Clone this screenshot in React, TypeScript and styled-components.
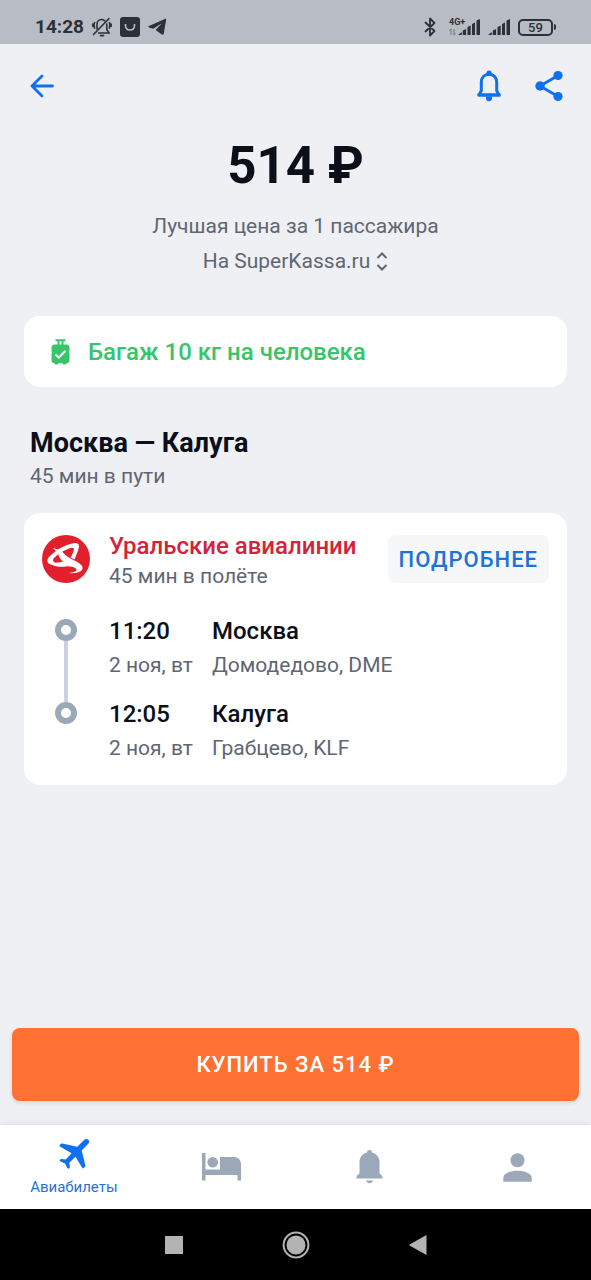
import React from "react";
import styled, { createGlobalStyle } from "styled-components";

const color = {
  page: "#eef0f4",
  status: "#b8bcc4",
  statusInk: "#2d3036",
  ink: "#0b0f1a",
  muted: "#5f6673",
  blue: "#0f70f2",
  link: "#1f72d6",
  green: "#38c56a",
  red: "#d3233b",
  orange: "#ff7033",
  icon: "#9ba8b8",
  rail: "#ccd1df",
};

const GlobalStyle = createGlobalStyle`
  * { box-sizing: border-box; }
  body {
    margin: 0;
    background: ${color.page};
    font-family: Roboto, "Noto Sans", sans-serif;
    color: ${color.ink};
  }
  h1, h2, h3, p, ul { margin: 0; padding: 0; }
  button { font: inherit; border: 0; padding: 0; background: none; cursor: pointer; }
  svg { display: block; flex: none; }
`;

const Screen = styled.div`
  min-height: 100vh;
  display: flex;
  flex-direction: column;
`;

const StatusBar = styled.div`
  display: flex;
  align-items: center;
  justify-content: space-between;
  height: 44px;
  padding: 10px 35px 0;
  background: ${color.status};
  color: ${color.statusInk};
`;

const StatusGroup = styled.div<{ $gap: number }>`
  display: flex;
  align-items: center;
  gap: ${(p) => p.$gap}px;
`;

const Clock = styled.span`
  font-size: 19px;
  line-height: 24px;
  font-weight: 700;
`;

const Network = styled.div`
  display: flex;
  align-items: flex-end;
`;

const NetworkType = styled.div`
  display: flex;
  flex-direction: column;
  gap: 1px;
  width: 9px;
  font-size: 9px;
  line-height: 9px;
  font-weight: 700;
  white-space: nowrap;
`;

const Battery = styled.div`
  display: flex;
  align-items: center;
`;

const BatteryBody = styled.span`
  width: 35px;
  height: 17px;
  border: 2px solid ${color.statusInk};
  border-radius: 5px;
  font-size: 13px;
  line-height: 13px;
  font-weight: 500;
  text-align: center;
`;

const BatteryTip = styled.span`
  width: 2px;
  height: 6px;
  margin-left: 1px;
  border-radius: 0 2px 2px 0;
  background: ${color.statusInk};
`;

const Toolbar = styled.header`
  display: flex;
  align-items: center;
  justify-content: space-between;
  height: 84px;
  padding: 0 26px;
`;

const ToolbarActions = styled.div`
  display: flex;
  gap: 28px;
`;

const IconButton = styled.button`
  display: flex;
  align-items: center;
  justify-content: center;
  width: 32px;
  height: 40px;
  color: ${color.blue};
`;

const Content = styled.main`
  flex: 1;
  display: flex;
  flex-direction: column;
  padding: 7px 24px 24px;
`;

const PriceBlock = styled.section`
  display: flex;
  flex-direction: column;
  align-items: center;
  margin-bottom: 37px;
  font-size: 21px;
  line-height: 35px;
  color: ${color.muted};
`;

const Price = styled.h1`
  margin-bottom: 12px;
  font-size: 51px;
  line-height: 62px;
  font-weight: 700;
  color: ${color.ink};
`;

const AgencyButton = styled.button`
  display: flex;
  align-items: center;
  gap: 6px;
  color: ${color.muted};
`;

const Card = styled.section`
  background: #fff;
  border-radius: 16px;
`;

const BaggageCard = styled(Card)`
  display: flex;
  align-items: center;
  gap: 17px;
  min-height: 71px;
  padding: 0 26px;
  margin-bottom: 39px;
  font-size: 24px;
  line-height: 30px;
  font-weight: 500;
  color: ${color.green};
`;

const RouteHeading = styled.div`
  padding: 0 6px;
  margin-bottom: 21px;
`;

const RouteTitle = styled.h2`
  font-size: 27px;
  line-height: 34px;
  font-weight: 700;
`;

const Note = styled.p<{ $line: number }>`
  font-size: 21px;
  line-height: ${(p) => p.$line}px;
  color: ${color.muted};
`;

const FlightCard = styled(Card)`
  padding: 22px 18px 20px;
`;

const FlightHeader = styled.div`
  display: flex;
  align-items: flex-start;
  gap: 19px;
  margin-bottom: 19px;
`;

const Airline = styled.div`
  flex: 1;
`;

const AirlineName = styled.h3`
  font-size: 24px;
  line-height: 22px;
  font-weight: 500;
  color: ${color.red};
`;

const DetailsButton = styled.button`
  height: 48px;
  padding: 0 11px;
  border-radius: 8px;
  background: #f5f7f9;
  color: ${color.link};
  font-size: 22px;
  font-weight: 500;
  letter-spacing: 1px;
`;

const Stops = styled.ul`
  list-style: none;
`;

const Stop = styled.li`
  display: grid;
  grid-template-columns: 48px 84px 1fr;
  column-gap: 19px;
`;

const Rail = styled.div`
  display: flex;
  flex-direction: column;
  align-items: center;
`;

const RailLine = styled.span<{ $visible: boolean; $lead?: boolean }>`
  width: 4px;
  ${(p) => (p.$lead ? "height: 5px;" : "flex: 1;")}
  background: ${(p) => (p.$visible ? color.rail : "transparent")};
`;

const RailDot = styled.span`
  width: 22px;
  height: 22px;
  border: 6px solid ${color.icon};
  border-radius: 50%;
`;

const StopCell = styled.div<{ $last: boolean }>`
  padding-bottom: ${(p) => (p.$last ? 0 : 15)}px;
  white-space: nowrap;
`;

const StopMain = styled.p`
  font-size: 24px;
  line-height: 34px;
  font-weight: 500;
`;

const BuyArea = styled.div`
  padding: 0 12px 24px;
`;

const BuyButton = styled.button`
  display: block;
  width: 100%;
  height: 73px;
  border-radius: 8px;
  background: ${color.orange};
  box-shadow: 0 2px 4px rgba(60, 70, 100, 0.14);
  color: #fff;
  font-size: 22px;
  font-weight: 500;
  letter-spacing: 1px;
`;

const TabBar = styled.nav`
  display: flex;
  height: 84px;
  background: #fff;
  box-shadow: 0 -1px 4px rgba(70, 70, 120, 0.1);
`;

const Tab = styled.a<{ $active?: boolean }>`
  flex: 1;
  display: flex;
  flex-direction: column;
  align-items: center;
  justify-content: center;
  gap: 8px;
  font-size: 15px;
  line-height: 18px;
  text-decoration: none;
  color: ${(p) => (p.$active ? color.link : color.icon)};
`;

const SystemNav = styled.div`
  display: flex;
  align-items: center;
  justify-content: center;
  gap: 90px;
  height: 71px;
  background: #000;
`;

const SystemButton = styled.button`
  display: flex;
  align-items: center;
  justify-content: center;
  width: 32px;
  height: 32px;
  color: #b3b3b3;
`;

const SignalBars = () => (
  <svg width="22" height="17" viewBox="0 0 22 17" fill="currentColor">
    <path d="M0 16l3.800-3v3zM4.800 11.500l3.300-1.500v6H4.800zM9.500 8l3.200-1.500V16H9.500zM14 5l3-1.500V16h-3zM18.500 1.500 22 0v16h-3.500z" />
  </svg>
);

const stops = [
  { time: "11:20", date: "2 ноя, вт", city: "Москва", airport: "Домодедово, DME" },
  { time: "12:05", date: "2 ноя, вт", city: "Калуга", airport: "Грабцево, KLF" },
];

export default function App() {
  return (
    <>
      <GlobalStyle />
      <Screen>
        <StatusBar>
          <StatusGroup $gap={8}>
            <Clock>14:28</Clock>
            <svg width="20" height="20" viewBox="0 0 20 20" fill="none" stroke="currentColor" strokeWidth="1.6" strokeLinecap="round">
              <path d="M1.500 17.500 17 1.500M5 12V7.500C5 4.500 7 2.500 9.500 2.500c1.200 0 2.300.4 3.100 1.200M14.800 7v5.500l2.200 3.500H6.500M8.500 18.600h3M2.600 5.500c-.8 1.500-.8 4 0 5.600M.8 7v2.500M17.300 5.500c.8 1.500.8 4 0 5.600M19.100 7v2.500" />
            </svg>
            <svg width="20" height="20" viewBox="0 0 20 20">
              <rect width="20" height="20" rx="3" fill="currentColor" />
              <path d="M5.500 8.500c.3 6 8.700 6 9 0" fill="none" stroke="#b8bcc4" strokeWidth="1.500" strokeLinecap="round" />
              <circle cx="5.500" cy="8" r="1" fill="#b8bcc4" />
              <circle cx="14.500" cy="8" r="1" fill="#b8bcc4" />
            </svg>
            <svg width="19" height="18" viewBox="0 0 19 18" fill="currentColor">
              <path d="M18.200 1.500c.1-.6-.2-.9-.8-.7L1 8c-.9.4-.8 1.100 0 1.400l4.300 1.400 8.600-5.600-6.300 6.700 6.300 4.600c.9.600 1.600.3 1.800-.8z" />
            </svg>
          </StatusGroup>
          <StatusGroup $gap={8}>
            <svg width="17" height="20" viewBox="0 0 17 20" fill="none" stroke="currentColor" strokeWidth="1.800" strokeLinejoin="round" strokeLinecap="round">
              <path d="M1.500 5.500l9 8.500-4.500 4.500V1.500l4.500 4.500-9 8.500" />
            </svg>
            <Network>
              <NetworkType>
                4G+
                <svg width="7" height="8" viewBox="0 0 7 8" fill="none" stroke="#6c7078" strokeWidth="1">
                  <path d="M2 7V1M.5 2.500 2 .8M5 1v6M6.500 5.500 5 7.200" />
                </svg>
              </NetworkType>
              <SignalBars />
            </Network>
            <SignalBars />
            <Battery>
              <BatteryBody>59</BatteryBody>
              <BatteryTip />
            </Battery>
          </StatusGroup>
        </StatusBar>

        <Toolbar>
          <IconButton aria-label="Назад">
            <svg width="24" height="24" viewBox="0 0 24 24" fill="none" stroke="currentColor" strokeWidth="2.800" strokeLinecap="round" strokeLinejoin="round">
              <path d="M22.500 12H2M12 2 2 12l10 10" />
            </svg>
          </IconButton>
          <ToolbarActions>
            <IconButton aria-label="Подписаться на цену">
              <svg width="26" height="32" viewBox="0 0 26 32">
                <path d="M13 4.200c-4.700 0-7.700 3.600-7.700 8.300v8.300L3 25h20l-2.300-4.200v-8.300c0-4.700-3-8.300-7.700-8.300z" fill="none" stroke="currentColor" strokeWidth="3" strokeLinejoin="round" />
                <circle cx="13" cy="3.200" r="2.600" fill="currentColor" />
                <path d="M10 26.500h6v1.800a3 3 0 0 1-6 0z" fill="currentColor" />
                <path d="M1.500 25h23" stroke="currentColor" strokeWidth="3" />
              </svg>
            </IconButton>
            <IconButton aria-label="Поделиться">
              <svg width="30" height="32" viewBox="0 0 30 32" fill="currentColor">
                <path d="M24 5.500 6 16l18 10.500" fill="none" stroke="currentColor" strokeWidth="2.800" />
                <circle cx="24" cy="5.500" r="4.600" />
                <circle cx="6" cy="16" r="4.700" />
                <circle cx="24" cy="26.500" r="4.600" />
              </svg>
            </IconButton>
          </ToolbarActions>
        </Toolbar>

        <Content>
          <PriceBlock>
            <Price>514 ₽</Price>
            <p>Лучшая цена за 1 пассажира</p>
            <AgencyButton>
              На SuperKassa.ru
              <svg width="12" height="20" viewBox="0 0 12 20" fill="none" stroke="currentColor" strokeWidth="2">
                <path d="M1.500 6 6 1.500 10.500 6M1.500 13 6 17.500l4.500-4.500" />
              </svg>
            </AgencyButton>
          </PriceBlock>

          <BaggageCard>
            <svg width="21" height="26" viewBox="0 0 21 26">
              <path d="M5.500 1.300h10M8.500 1v5M12.500 1v5" stroke="currentColor" strokeWidth="2" />
              <path d="M4.500 5.500h12c2 0 3 1.500 3 3.500v3c0 .8-.5 1-.5 1.500s.5.700.5 1.500v6c0 2-1.200 3.300-3 3.300 0 .6-.4 1.100-1.200 1.100h-1.600c-.8 0-1.200-.5-1.200-1.100h-4c0 .6-.4 1.100-1.200 1.100H5.700c-.8 0-1.200-.5-1.200-1.100-1.900 0-3-1.300-3-3.300v-6c0-.8.500-1 .5-1.500s-.5-.7-.5-1.500V9c0-2 1-3.500 3-3.500z" fill="currentColor" />
              <path d="M5.500 15.500l3.300 3.200 6.700-6.900" fill="none" stroke="#fff" strokeWidth="2" />
            </svg>
            Багаж 10 кг на человека
          </BaggageCard>

          <RouteHeading>
            <RouteTitle>Москва — Калуга</RouteTitle>
            <Note $line={32}>45 мин в пути</Note>
          </RouteHeading>

          <FlightCard>
            <FlightHeader>
              <svg width="48" height="48" viewBox="0 0 48 48">
                <circle cx="24" cy="24" r="24" fill="#e21f2c" />
                <g fill="#fff">
                  <path d="M10 30C4.500 28.500 4 24.500 8 21 13.500 15.500 23 9.500 31.500 8.200c5-.6 6.500 1.800 5 5.800-1.200 3.800-2.600 7-4 10.500l-4-2c1.500-2.500 2.700-5 3.300-7.500.4-2.300-.6-2.800-3-2C22 15 15.500 19.500 12 23c-1.600 2-1.400 3.500 1 4z" />
                  <path d="M11 13l5.500 1.500 4.500-2-1.500 3.500c2.500 3 5 5 9 7.500 5 2.800 10.500 4.500 12 8.500 1.200 4.500-6 7-14 6 5-.5 8.500-1.500 8-3.500-.6-2-7-4-11.500-6.500-4.400-2.600-6-6.500-7-9.500z" />
                  <path d="M7 27c5 1.200 11 .6 15.500-.8 4 2.400 10 3.600 13.500 7.300-4-1.500-8-2.300-12-2.100-5 .8-13 1-17-4.400z" />
                </g>
              </svg>
              <Airline>
                <AirlineName>Уральские авиалинии</AirlineName>
                <Note $line={38}>45 мин в полёте</Note>
              </Airline>
              <DetailsButton>ПОДРОБНЕЕ</DetailsButton>
            </FlightHeader>
            <Stops>
              {stops.map((stop, i) => {
                const last = i === stops.length - 1;
                return (
                  <Stop key={stop.time}>
                    <Rail>
                      <RailLine $lead $visible={i > 0} />
                      <RailDot />
                      <RailLine $visible={!last} />
                    </Rail>
                    <StopCell $last={last}>
                      <StopMain>{stop.time}</StopMain>
                      <Note $line={34}>{stop.date}</Note>
                    </StopCell>
                    <StopCell $last={last}>
                      <StopMain>{stop.city}</StopMain>
                      <Note $line={34}>{stop.airport}</Note>
                    </StopCell>
                  </Stop>
                );
              })}
            </Stops>
          </FlightCard>
        </Content>

        <BuyArea>
          <BuyButton>КУПИТЬ ЗА 514 ₽</BuyButton>
        </BuyArea>

        <TabBar>
          <Tab href="#flights" $active>
            <svg width="32" height="32" viewBox="0 0 32 32" fill={color.blue}>
              <path d="M30.400 1.700c1.200 1.200.9 3-.4 4.400l-6.300 6.500 3.700 14.800c.1.500 0 .9-.3 1.200l-1.400 1.400c-.5.500-1.200.4-1.500-.2L17.500 18.700l-6.200 6 .6 4.300c0 .3-.1.600-.3.800l-.8.700c-.4.400-1 .3-1.300-.2L7 25.600l-4.900-2.300c-.5-.3-.6-.9-.2-1.300l.8-.8c.2-.2.500-.3.800-.3l4.200.5 5.900-6.200L1.900 8.600c-.6-.3-.7-1-.2-1.500l1.400-1.300c.3-.3.800-.4 1.200-.3l15 3.200L26 2.100c1.400-1.300 3.200-1.600 4.400-.4z" />
            </svg>
            Авиабилеты
          </Tab>
          <Tab href="#hotels" aria-label="Отели">
            <svg width="39" height="28" viewBox="0 0 39 28" fill="currentColor">
              <path d="M0 0h3.500v16.500H18V4h14c4 0 7 3 7 7v16.500h-3.500v-5.500h-32v5.500H0z" />
              <circle cx="10.700" cy="9.300" r="5.300" />
            </svg>
          </Tab>
          <Tab href="#subscriptions" aria-label="Подписки">
            <svg width="27" height="34" viewBox="0 0 27 34" fill="currentColor">
              <path d="M11 2.500C11 1 12 0 13.500 0S16 1 16 2.500c4.500 1.200 7.500 5 7.500 9.500v11.500c1.500.8 3 2.500 3.300 5H.2c.3-2.500 1.800-4.200 3.300-5V12c0-4.500 3-8.300 7.500-9.500zM10 30.500h7c-.6 1.700-2 2.800-3.500 2.800S10.600 32.200 10 30.500z" />
            </svg>
          </Tab>
          <Tab href="#profile" aria-label="Профиль">
            <svg width="29" height="29" viewBox="0 0 29 29" fill="currentColor">
              <circle cx="14.500" cy="7.200" r="7" />
              <path d="M.3 28.800V25c0-4.500 7-7.200 14.200-7.200S28.700 20.500 28.700 25v3.800z" />
            </svg>
          </Tab>
        </TabBar>

        <SystemNav>
          <SystemButton aria-label="Недавние приложения">
            <svg width="18" height="18" viewBox="0 0 18 18" fill="currentColor">
              <rect width="18" height="18" />
            </svg>
          </SystemButton>
          <SystemButton aria-label="Домой">
            <svg width="28" height="28" viewBox="0 0 28 28" fill="currentColor">
              <circle cx="14" cy="14" r="12.400" fill="none" stroke="currentColor" strokeWidth="2" />
              <circle cx="14" cy="14" r="9.500" />
            </svg>
          </SystemButton>
          <SystemButton aria-label="Назад">
            <svg width="18" height="20" viewBox="0 0 18 20" fill="currentColor">
              <path d="M17.500 0v20L.5 10.500v-1z" />
            </svg>
          </SystemButton>
        </SystemNav>
      </Screen>
    </>
  );
}
